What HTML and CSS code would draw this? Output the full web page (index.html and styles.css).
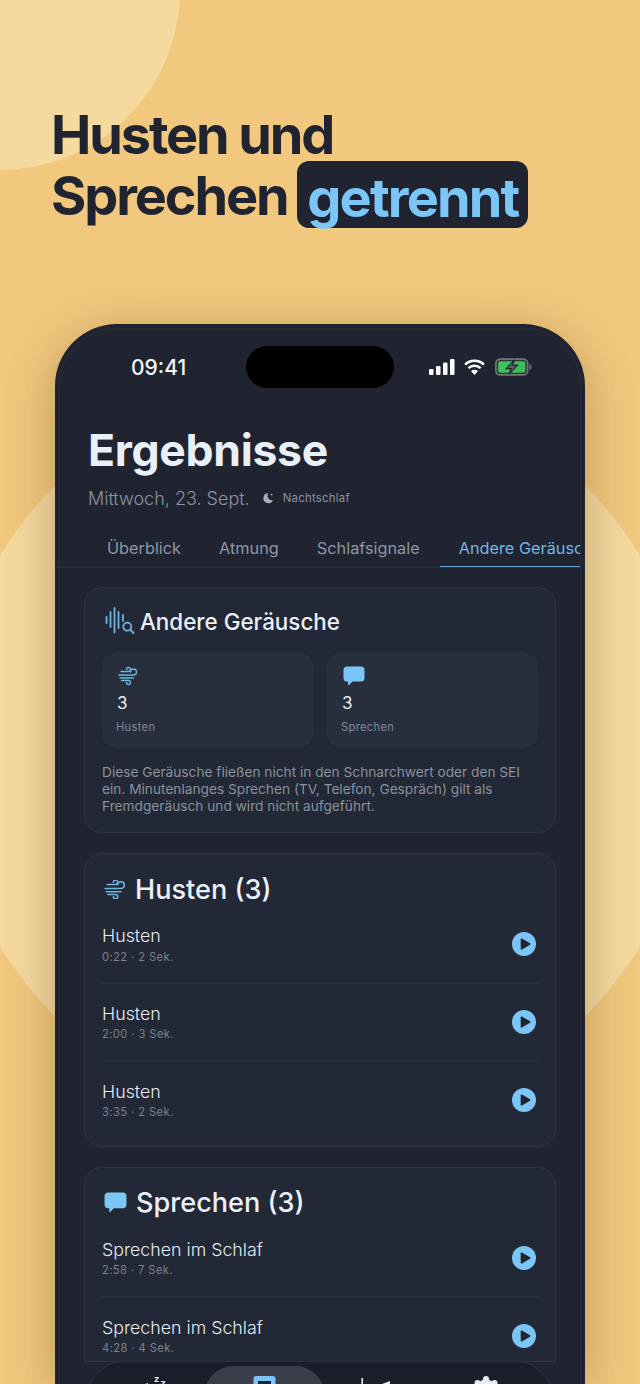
FILE: index.html
```html
<!DOCTYPE html>
<html lang="de">
<head>
    <meta charset="UTF-8">
    <title>Husten und Sprechen getrennt</title>
    <link rel="stylesheet" href="styles.css">
</head>
<body>
    <div class="blob blob-top"></div>
    <div class="blob blob-mid"></div>

    <h1 class="headline">
        <span class="headline-line">Husten und</span>
        <span class="headline-line">Sprechen <span class="pill">getrennt</span></span>
    </h1>

    <div class="phone">
        <div class="status-bar">
            <span class="clock">09:41</span>
            <div class="island"></div>
            <div class="status-icons">
                <svg width="26" height="16" viewBox="0 0 26 16"><g fill="#fff"><rect x="0" y="10" width="4.500" height="6" rx="1.200"/><rect x="7" y="7" width="4.500" height="9" rx="1.200"/><rect x="14" y="3.500" width="4.500" height="12.500" rx="1.200"/><rect x="21" y="0" width="4.500" height="16" rx="1.200"/></g></svg>
                <svg width="21" height="16" viewBox="0 0 20 15"><g fill="none" stroke="#fff" stroke-width="2.300"><path d="M1 5.200c5-4.900 13-4.900 18 0"/><path d="M4.200 8.500c3.200-3 8.400-3 11.600 0"/></g><path d="M10 15l-3.300-3.600c1.900-1.600 4.700-1.600 6.600 0z" fill="#fff"/></svg>
                <svg width="37" height="18" viewBox="0 0 36 17"><rect x=".8" y=".8" width="31" height="15.400" rx="4.400" fill="#2e3a36" stroke="#707876" stroke-width="1.600"/><rect x="3" y="3" width="26.600" height="11" rx="2.600" fill="#3fbf5b"/><path d="M33.600 5.600c1.400.4 1.900 1.400 1.900 2.900s-.5 2.500-1.900 2.900z" fill="#707876"/><path d="M19 1.500l-8 8.600h4.600l-2 5.400 8.400-8.800h-4.800z" fill="#5b6462" stroke="#1f2430" stroke-width="1.200"/></svg>
            </div>
        </div>

        <div class="page-head">
            <h2 class="title">Ergebnisse</h2>
            <div class="subtitle">
                <span class="date">Mittwoch, 23. Sept.</span>
                <svg class="moon" width="12" height="12" viewBox="0 0 12 12"><path d="M6.400 1.200a5 5 0 1 0 4.600 6.900A4.400 4.400 0 0 1 6.400 1.200z" fill="#a9afba"/><circle cx="9.600" cy="2.600" r=".9" fill="#a9afba"/></svg>
                <span class="sleep-type">Nachtschlaf</span>
            </div>
        </div>

        <div class="tabs">
            <span class="tab">Überblick</span>
            <span class="tab">Atmung</span>
            <span class="tab">Schlafsignale</span>
            <span class="tab tab-active">Andere Geräusche</span>
        </div>

        <div class="content">
            <section class="card card-overview">
                <h3 class="overview-title">
                    <svg width="30" height="28" viewBox="0 0 30 28"><g fill="none" stroke="#6fb4e0" stroke-width="1.800" stroke-linecap="round"><path d="M1.500 10v6"/><path d="M5.500 5v15"/><path d="M9.500 1v24.500"/><path d="M13.500 5v16"/><path d="M18 8v6"/><circle cx="22.300" cy="19.700" r="4"/><path d="M25.300 22.700l3.200 3.300"/></g></svg>
                    Andere Geräusche
                </h3>
                <div class="stats">
                    <div class="stat">
                        <svg class="stat-icon" width="20" height="17" viewBox="0 0 20 17"><use href="#wind"/></svg>
                        <div class="stat-value">3</div>
                        <div class="stat-label">Husten</div>
                    </div>
                    <div class="stat">
                        <svg class="stat-icon" width="22" height="20" viewBox="0 0 22 20"><use href="#bubble"/></svg>
                        <div class="stat-value">3</div>
                        <div class="stat-label">Sprechen</div>
                    </div>
                </div>
                <p class="note">Diese Geräusche fließen nicht in den Schnarchwert oder den SEI ein. Minutenlanges Sprechen (TV, Telefon, Gespräch) gilt als Fremdgeräusch und wird nicht aufgeführt.</p>
            </section>

            <section class="card card-list">
                <h3 class="list-title">
                    <svg width="22" height="19" viewBox="0 0 20 17"><use href="#wind"/></svg>
                    Husten (3)
                </h3>
                <div class="row">
                    <div class="row-text"><div class="row-name">Husten</div><div class="row-meta">0:22 · 2 Sek.</div></div>
                    <svg class="play" width="24" height="24" viewBox="0 0 24 24"><use href="#play"/></svg>
                </div>
                <div class="row">
                    <div class="row-text"><div class="row-name">Husten</div><div class="row-meta">2:00 · 3 Sek.</div></div>
                    <svg class="play" width="24" height="24" viewBox="0 0 24 24"><use href="#play"/></svg>
                </div>
                <div class="row">
                    <div class="row-text"><div class="row-name">Husten</div><div class="row-meta">3:35 · 2 Sek.</div></div>
                    <svg class="play" width="24" height="24" viewBox="0 0 24 24"><use href="#play"/></svg>
                </div>
            </section>

            <section class="card card-list card-cut">
                <h3 class="list-title">
                    <svg width="23" height="21" viewBox="0 0 22 20"><use href="#bubble"/></svg>
                    Sprechen (3)
                </h3>
                <div class="row">
                    <div class="row-text"><div class="row-name">Sprechen im Schlaf</div><div class="row-meta">2:58 · 7 Sek.</div></div>
                    <svg class="play" width="24" height="24" viewBox="0 0 24 24"><use href="#play"/></svg>
                </div>
                <div class="row">
                    <div class="row-text"><div class="row-name">Sprechen im Schlaf</div><div class="row-meta">4:28 · 4 Sek.</div></div>
                    <svg class="play" width="24" height="24" viewBox="0 0 24 24"><use href="#play"/></svg>
                </div>
            </section>
        </div>

        <nav class="tabbar">
            <div class="nav-item">
                <svg width="30" height="24" viewBox="0 0 30 24"><path d="M9 8a8 8 0 1 0 9 10A9 9 0 0 1 9 8z" fill="#e8edf4"/><text x="15" y="6.500" class="zzz">z</text><text x="21.500" y="11" class="zzz">z</text></svg>
            </div>
            <div class="nav-item nav-item-active">
                <svg width="23" height="24" viewBox="0 0 23 24"><rect x=".5" y="1" width="22" height="23" rx="3" fill="#7cc5f7"/><rect x="5" y="6" width="13" height="4" fill="#1f2430"/></svg>
            </div>
            <div class="nav-item">
                <svg width="30" height="24" viewBox="0 0 30 24"><path d="M1.200 3v21" stroke="#e8edf4" stroke-width="1.600"/><path d="M21 9l8-3v6z" fill="#e8edf4"/></svg>
            </div>
            <div class="nav-item">
                <svg width="24" height="24" viewBox="0 0 24 24"><circle cx="12" cy="13" r="9" fill="#e8edf4"/><circle cx="12" cy="4" r="3" fill="#e8edf4"/><circle cx="3.500" cy="8" r="3" fill="#e8edf4"/><circle cx="20.500" cy="8" r="3" fill="#e8edf4"/></svg>
            </div>
        </nav>
    </div>

    <svg class="defs" width="0" height="0">
        <defs>
            <g id="wind" fill="none" stroke="#6fb4e0" stroke-width="1.400" stroke-linecap="round">
                <path d="M3 4h7.500a2 2 0 1 0-2-2"/>
                <path d="M1 7.500h14.500a3 3 0 1 0-3-3"/>
                <path d="M2 10.500h13.500"/>
                <path d="M3.500 13h7a2 2 0 1 1-2 2"/>
            </g>
            <path id="bubble" d="M4 .5h14a3.500 3.500 0 0 1 3.500 3.500v8a3.500 3.500 0 0 1-3.500 3.500h-8.500l-3.500 3.500c-.5.5-1 .2-1-.4v-3.100h-1a3.500 3.500 0 0 1-3.500-3.500v-8a3.500 3.500 0 0 1 3.500-3.500z" fill="#7cc5f7"/>
            <g id="play">
                <circle cx="12" cy="12" r="12" fill="#7cc5f7"/>
                <path d="M8.700 7.300c0-.8.700-1.100 1.300-.8l8 4.700c.6.400.6 1.200 0 1.600l-8 4.700c-.6.300-1.300 0-1.300-.8z" fill="#1f2430"/>
            </g>
        </defs>
    </svg>
</body>
</html>
```

FILE: styles.css
```css
body {
    margin: 0;
    width: 640px;
    height: 1384px;
    overflow: hidden;
    position: relative;
    background: #f2c87e;
    font-family: Inter, "Liberation Sans", sans-serif;
}
.blob {
    position: absolute;
    border-radius: 50%;
    background: #f6d99f;
}
.blob-top {
    left: -180px;
    top: -190px;
    width: 360px;
    height: 360px;
}
.blob-mid {
    left: -55px;
    top: 376px;
    width: 750px;
    height: 750px;
}
.defs {
    position: absolute;
}

.headline {
    position: relative;
    margin: 0;
    padding: 104px 0 0 51px;
    font-size: 54px;
    font-weight: 700;
    line-height: 61px;
    letter-spacing: -2.100px;
    color: #1f2430;
}
.headline-line {
    display: block;
    white-space: nowrap;
}
.pill {
    display: inline-block;
    margin-left: -1px;
    margin-top: -4px;
    padding: 0 10px;
    height: 67px;
    line-height: 73px;
    vertical-align: top;
    letter-spacing: -1.850px;
    background: #1f2430;
    border-radius: 12px;
    color: #7cc5f7;
}

.phone {
    position: relative;
    box-sizing: border-box;
    width: 530px;
    height: 1060px;
    margin: 96px 0 0 55px;
    background: #1f2430;
    border-radius: 62px 62px 0 0;
    box-shadow: 0 10px 50px rgba(70, 50, 20, 0.32);
    overflow: hidden;
}
.phone::before {
    content: "";
    position: absolute;
    top: 4px;
    left: 4px;
    right: 4px;
    bottom: -70px;
    border: 1px solid #282e3a;
    border-radius: 58px;
}

.status-bar {
    position: relative;
    display: flex;
    align-items: center;
    height: 42px;
    padding: 22px 50px 0 76px;
}
.clock {
    flex: none;
    width: 115px;
    font-size: 21px;
    font-weight: 500;
    color: #f2f4f8;
}
.island {
    flex: none;
    width: 148px;
    height: 42px;
    background: #000;
    border-radius: 22px;
}
.status-icons {
    display: flex;
    flex: none;
    align-items: center;
    gap: 9px;
    margin-left: 35px;
}
.status-icons svg:last-child {
    margin-left: 1px;
}

.page-head {
    padding: 36px 0 0 33px;
}
.title {
    margin: 0;
    font-size: 44.500px;
    font-weight: 700;
    line-height: 52px;
    letter-spacing: -0.300px;
    color: #eaf0fa;
}
.subtitle {
    display: flex;
    align-items: center;
    margin-top: 10px;
    height: 24px;
    color: #8d93a0;
}
.date {
    font-size: 18px;
    font-weight: 300;
}
.moon {
    margin-left: 12px;
}
.sleep-type {
    margin-left: 9px;
    font-size: 11.300px;
    letter-spacing: 0.300px;
}

.tabs {
    display: flex;
    width: 525px;
    overflow: hidden;
    margin-top: 22px;
    padding-left: 33px;
    box-sizing: border-box;
    border-bottom: 1px solid #2b3240;
    white-space: nowrap;
}
.tab {
    padding: 0 19px;
    height: 35px;
    line-height: 33px;
    font-size: 16.300px;
    color: #8f97a5;
    box-sizing: border-box;
}
.tab-active {
    flex: none;
    color: #72b6e6;
    border-bottom: 2px solid #5f9fcc;
    margin-left: 1px;
    margin-bottom: -1px;
    height: 36px;
}

.content {
    padding: 19px 29px 0;
}
.card {
    box-sizing: border-box;
    background: #222835;
    border: 1px solid #2e3543;
    border-radius: 18px;
    margin-bottom: 20px;
    padding: 0 17px;
}
.card-overview {
    height: 246px;
}
.card-list {
    padding-bottom: 7px;
}
.card-cut {
    height: 195px;
    overflow: hidden;
    border-radius: 18px 18px 0 0;
}
.overview-title {
    display: flex;
    align-items: center;
    gap: 5px;
    margin: 0 0 0 3px;
    padding-top: 17px;
    height: 32px;
    font-size: 22.400px;
    font-weight: 500;
    color: #eaf0fa;
}
.stats {
    display: grid;
    grid-template-columns: 1fr 1fr;
    gap: 14px;
    margin-top: 15px;
}
.stat {
    height: 96px;
    box-sizing: border-box;
    padding: 13px 13px 0;
    background: #282f3c;
    border: 1px solid #2b3240;
    border-radius: 16px;
}
.stat-icon {
    display: block;
    height: 20px;
    margin-left: 2px;
}
.stat-value {
    margin-top: 6px;
    margin-left: 1px;
    font-size: 17px;
    line-height: 22px;
    color: #e6eaf1;
}
.stat-label {
    margin-top: 6px;
    font-size: 11.200px;
    letter-spacing: 0.300px;
    color: #808795;
}
.note {
    margin: 16px 0 0;
    font-size: 13.700px;
    line-height: 17px;
    color: #8a909c;
}

.list-title {
    display: flex;
    align-items: center;
    gap: 9px;
    margin: 0 0 0 2px;
    padding-top: 18px;
    height: 34px;
    font-size: 27.100px;
    font-weight: 500;
    color: #eaf0fa;
}
.row {
    display: flex;
    align-items: center;
    justify-content: space-between;
    height: 77.500px;
    box-sizing: border-box;
    padding-right: 2px;
    border-bottom: 1px solid #2b3240;
}
.row:last-child {
    border-bottom: none;
}
.row-text {
    margin-top: 1.500px;
}
.row-name {
    font-size: 17.800px;
    font-weight: 300;
    line-height: 22px;
    color: #e6eaf1;
}
.row-meta {
    margin-top: 2.500px;
    font-size: 11.200px;
    letter-spacing: 0.400px;
    line-height: 15px;
    color: #7b818e;
}

.tabbar {
    position: absolute;
    left: 33px;
    right: 33px;
    top: 1037px;
    height: 60px;
    display: flex;
    justify-content: center;
    padding-top: 4px;
    box-sizing: border-box;
    background: #1a1e28;
    border: 1px solid #2a303c;
    border-radius: 36px 36px 0 0;
}
.nav-item {
    display: flex;
    justify-content: center;
    flex: none;
    width: 110.500px;
    padding-top: 9px;
}
.nav-item-active {
    width: 121px;
    margin: 0 -5px;
    background: #3a3e48;
    border-radius: 30px 30px 0 0;
}
.zzz {
    font-size: 9px;
    font-weight: 700;
    fill: #e8edf4;
}
```
